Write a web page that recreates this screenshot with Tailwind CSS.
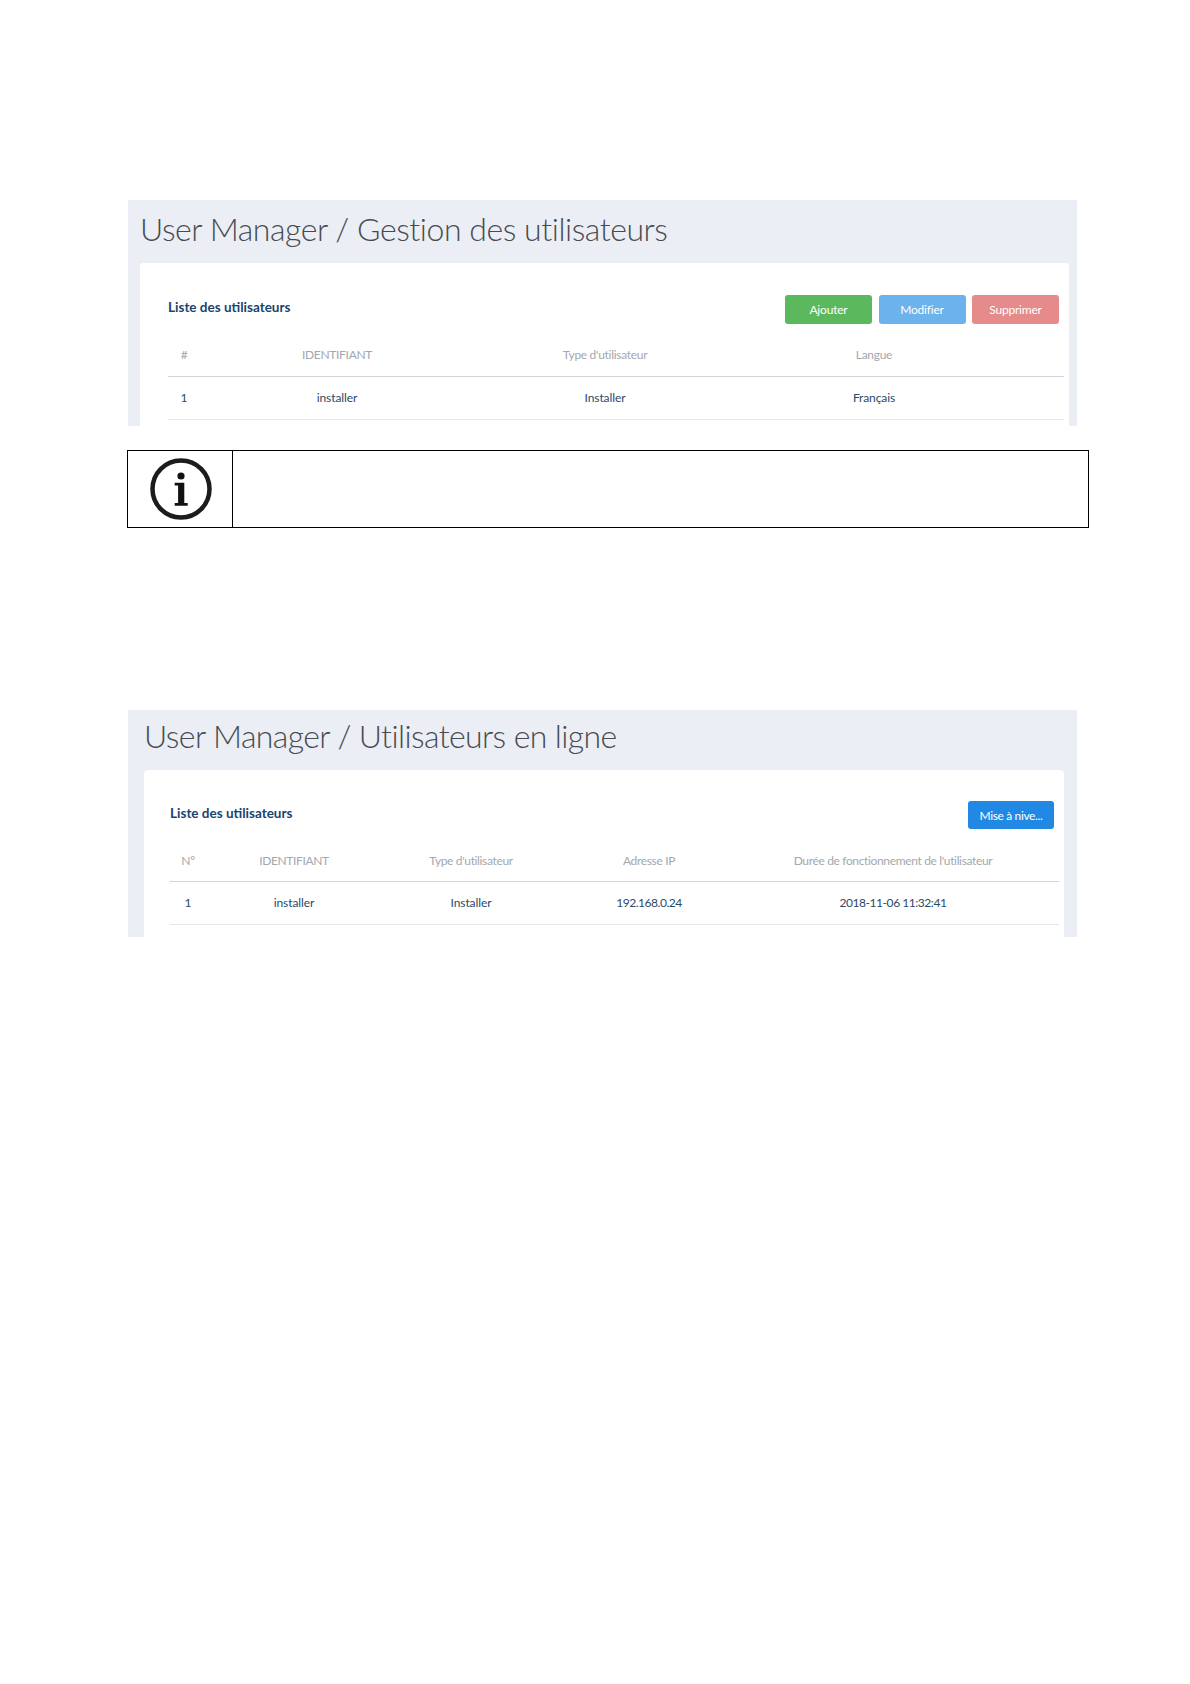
<!DOCTYPE html>
<html>
<head>
    <title>User Manager</title>
    <meta charset="UTF-8">
    <script src="https://cdn.jsdelivr.net/npm/@tailwindcss/browser@4"></script>
</head>
<body class="bg-white font-['Lato',sans-serif] min-h-[1684px]">
<div class="pl-[128px] pt-[200px]">

    <!-- Gestion des utilisateurs -->
    <section class="w-[949px] h-[226px] bg-[#ebeef4] pl-[12px] pr-[8px] overflow-hidden">
        <h1 class="h-[63px] pt-[7px] text-[32px] tracking-[-0.45px] leading-[44px] font-light text-[#474b51]">User Manager / Gestion des utilisateurs</h1>
        <div class="h-[163px] bg-white rounded-t-[3px] pl-[28px] pr-[5px]">
            <div class="h-[73px] flex items-start justify-between pt-[32px]">
                <h2 class="mt-[2px] text-[13.5px] leading-[20px] font-bold text-[#17456f]">Liste des utilisateurs</h2>
                <div class="flex gap-[6.5px] pr-[5px]">
                    <button class="w-[87px] h-[29px] rounded-[3px] bg-[#5cb85c] text-white text-[12px] tracking-[-0.2px]">Ajouter</button>
                    <button class="w-[87px] h-[29px] rounded-[3px] bg-[#6cb2ec] text-white text-[12px] tracking-[-0.2px]">Modifier</button>
                    <button class="w-[87px] h-[29px] rounded-[3px] bg-[#e58b8b] text-white text-[12px] tracking-[-0.2px]">Supprimer</button>
                </div>
            </div>
            <table class="w-[896px] table-fixed text-[12px]">
                <thead>
                    <tr class="h-[40px] border-b border-[#d0d3d8] text-center text-[#a3a8ae] tracking-[-0.3px]">
                        <th class="w-[32px] pb-[2px] font-normal">#</th>
                        <th class="w-[274px] pb-[2px] font-normal">IDENTIFIANT</th>
                        <th class="w-[262px] pb-[2px] font-normal">Type d'utilisateur</th>
                        <th class="w-[276px] pb-[2px] font-normal">Langue</th>
                        <th></th>
                    </tr>
                </thead>
                <tbody>
                    <tr class="h-[43px] border-b border-[#e4e6ea] text-center text-[#2b4a68] tracking-[-0.1px]">
                        <td>1</td>
                        <td>installer</td>
                        <td>Installer</td>
                        <td>Français</td>
                        <td></td>
                    </tr>
                </tbody>
            </table>
        </div>
    </section>

    <!-- Note -->
    <div class="mt-[24px] w-[962px] h-[78px] border border-black flex -ml-[1px]">
        <div class="w-[105px] pl-[2px] border-r border-black flex items-center justify-center">
            <svg width="64" height="64" viewBox="0 0 64 64">
                <circle cx="32" cy="32" r="28.5" fill="none" stroke="#1c1c1c" stroke-width="4.5"/>
                <circle cx="32" cy="19" r="3.6" fill="#111"/>
                <path d="M25.700 25.700h9.600v20.200h3.400v2.800h-13v-2.800h3.400v-17.400h-3.400z" fill="#111"/>
            </svg>
        </div>
    </div>

    <!-- Utilisateurs en ligne -->
    <section class="mt-[182px] w-[949px] h-[227px] bg-[#ebeef4] pl-[16px] pr-[13px] overflow-hidden">
        <h1 class="h-[60px] pt-[4px] text-[32px] tracking-[-0.6px] leading-[44px] font-light text-[#474b51]">User Manager / Utilisateurs en ligne</h1>
        <div class="h-[167px] bg-white rounded-t-[4px] pl-[26px] pr-[5px]">
            <div class="h-[71px] flex items-start justify-between pt-[31px]">
                <h2 class="mt-[2px] text-[13.5px] leading-[20px] font-bold text-[#17456f]">Liste des utilisateurs</h2>
                <button class="mr-[5px] w-[86px] h-[28px] pt-[1px] rounded-[3px] bg-[#2189e3] text-white text-[12px] tracking-[-0.35px]">Mise à nive...</button>
            </div>
            <table class="w-[889px] table-fixed text-[12px]">
                <thead>
                    <tr class="h-[40px] border-b border-[#d0d3d8] text-center text-[#a3a8ae] tracking-[-0.35px]">
                        <th class="w-[36px] font-normal">Nº</th>
                        <th class="w-[176px] font-normal">IDENTIFIANT</th>
                        <th class="w-[178px] font-normal">Type d'utilisateur</th>
                        <th class="w-[178px] font-normal">Adresse IP</th>
                        <th class="w-[310px] font-normal">Durée de fonctionnement de l'utilisateur</th>
                        <th></th>
                    </tr>
                </thead>
                <tbody>
                    <tr class="h-[43px] border-b border-[#e4e6ea] text-center text-[#2b4a68] tracking-[-0.1px]">
                        <td>1</td>
                        <td>installer</td>
                        <td>Installer</td>
                        <td class="tracking-[-0.45px]">192.168.0.24</td>
                        <td class="tracking-[-0.45px]">2018-11-06 11:32:41</td>
                        <td></td>
                    </tr>
                </tbody>
            </table>
        </div>
    </section>
</div>
</body>
</html>
